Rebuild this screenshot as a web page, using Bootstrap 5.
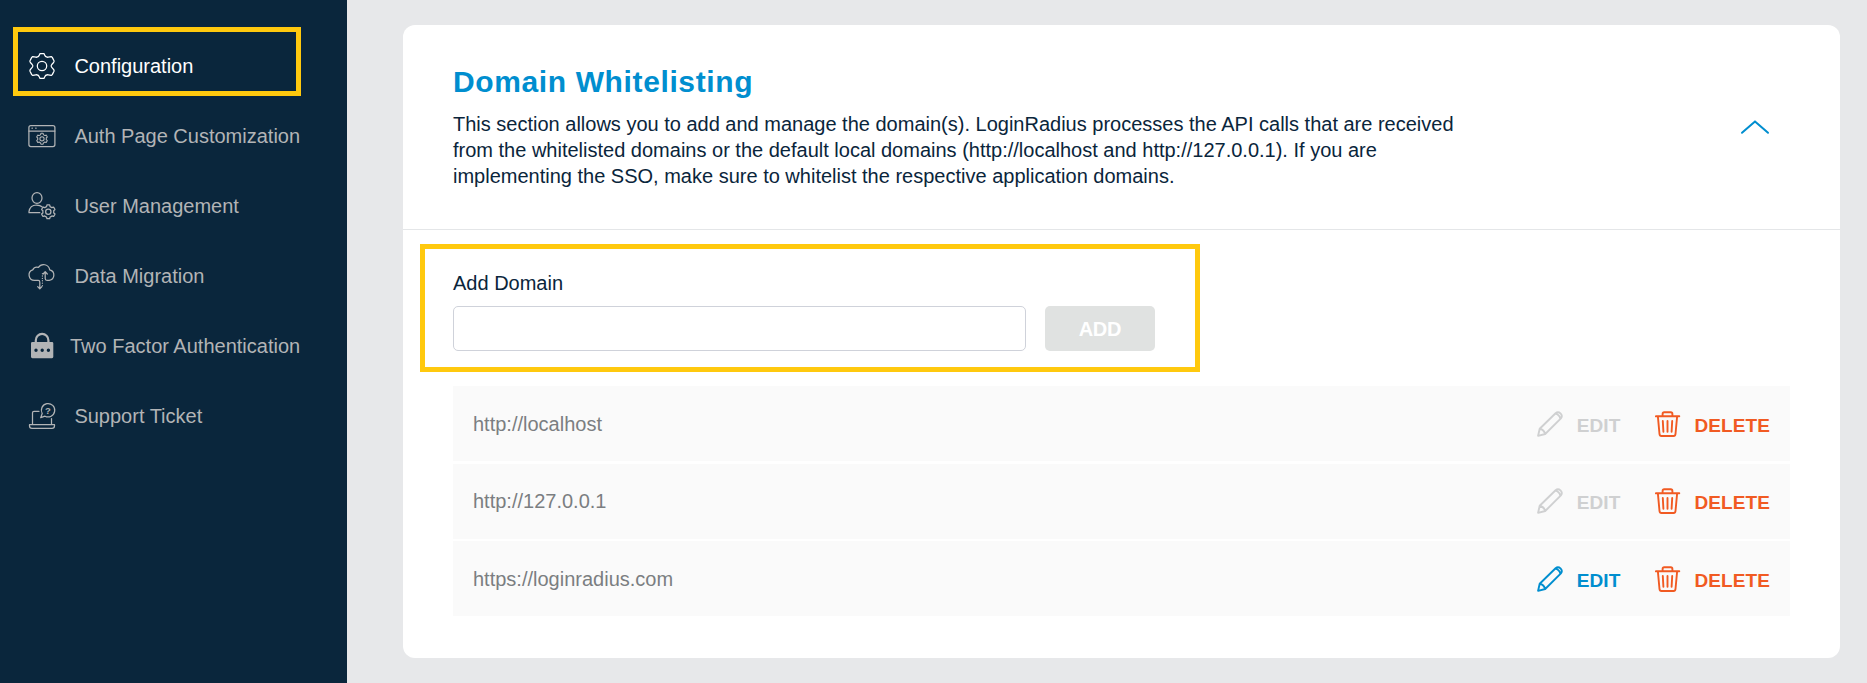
<!DOCTYPE html>
<html lang="en">
<head>
<meta charset="utf-8">
<meta name="viewport" content="width=device-width, initial-scale=1">
<title>Domain Whitelisting</title>
<link rel="stylesheet" href="https://cdn.jsdelivr.net/npm/bootstrap@5.3.0/dist/css/bootstrap.min.css">
<style>
  body { font-family: "Liberation Sans", Arial, sans-serif; font-size: 20px; line-height: 26px; color: #0a253b; background: #e7e8ea; }
  .sidebar { width: 347px; background: #0a263c; padding-top: 31px; }
  .sidebar .nav-link { height: 70px; padding: 0 0 0 28px; color: #b2b4b6; gap: 18.4px; white-space: nowrap; }
  .sidebar .nav-link.active { color: #fff; }
  .sidebar .nav-link.tight { gap: 14px; }
  .sidebar svg { width: 28px; height: 28px; }
  .line-icon { fill: none; stroke: currentColor; stroke-width: 1.25; stroke-linejoin: round; stroke-linecap: round; flex: none; overflow: visible; }
  .marker { position: absolute; border: 5px solid #ffc90e; pointer-events: none; }
  .marker-nav { left: 13px; top: -4px; width: 288px; height: 69px; }
  .marker-form { left: 17px; top: 14px; width: 780px; height: 128px; }
  main { padding: 25px 27px 25px 56px; }
  .panel { height: 633px; border: 0; border-radius: 12px; color: inherit; }
  .panel-head { height: 205px; padding: 38px 71px 0 50px; border-bottom: 1px solid #e4e6e8; }
  .panel-head h1 { font-size: 30px; line-height: 38px; font-weight: 700; letter-spacing: .62px; color: #008ecf; margin: 0 0 10px; }
  .panel-head p { width: 1030px; }
  .chevron { width: 28px; height: 14px; margin-top: 57px; color: #008ecf; }
  .chevron path { stroke-width: 2; }
  .panel-body { padding: 40px 50px 0; }
  .domain-label { margin-bottom: 10px; }
  .domain-input { width: 573px; height: 45px; border: 1px solid #cfd2da; border-radius: 5px; }
  .btn-add { width: 110px; height: 45px; border: 0; border-radius: 5px; font-size: 20px; font-weight: 700; padding: 0; letter-spacing: -.2px; margin-left: 19px; }
  .btn-add:disabled { background: #e0e2e1; color: #fff; opacity: 1; }
  .domains { margin-top: 35px; gap: 2.6px; }
  .domain-item { height: 75px; background: #fafafa; padding: 0 20px; color: #7b7e81; }
  .action { font-size: 19px; font-weight: 700; letter-spacing: .1px; color: #f15a22; text-decoration: none; gap: 13px; }
  .action svg { width: 26px; height: 26px; stroke-width: 1.9; }
  .action span { position: relative; top: 2.4px; }
  .action-edit { color: #008ecf; margin-right: 35px; gap: 14px; }
  .action-edit.off { color: #cfd0d1; }
</style>
</head>
<body>
<svg class="d-none">
  <symbol id="gear" viewBox="-14 -14 28 28" overflow="visible">
    <path vector-effect="non-scaling-stroke" d="M-3.2-9.6L-2.7-12.2Q-2.6-12.8-2-12.8H2Q2.6-12.8 2.7-12.2L3.2-9.6Q5-9 6.71-7.57L9.2-8.5Q9.8-8.7 10.1-8.1L12.1-4.7Q12.4-4.1 12-3.7L9.91-2.03Q10.3 0 9.91 2.03L12 3.7Q12.4 4.1 12.1 4.7L10.1 8.1Q9.8 8.7 9.2 8.5L6.71 7.57Q5 9 3.2 9.6L2.7 12.2Q2.6 12.8 2 12.8H-2Q-2.6 12.8-2.7 12.2L-3.2 9.6Q-5 9-6.71 7.57L-9.2 8.5Q-9.8 8.7-10.1 8.1L-12.1 4.7Q-12.4 4.1-12 3.7L-9.91 2.03Q-10.3 0-9.91-2.03L-12-3.7Q-12.4-4.1-12.1-4.7L-10.1-8.1Q-9.8-8.7-9.2-8.5L-6.71-7.57Q-5-9-3.2-9.6Z"/>
    <circle r="4.9" vector-effect="non-scaling-stroke"/>
  </symbol>
  <symbol id="pencil" viewBox="0 0 26 26">
    <path d="M1.1 24.8L2.7 17.8L18.6 2.2Q21 .2 23.5 2.4Q25.9 4.9 23.9 7.3L8.2 23ZM2.7 17.8Q7 18.8 8.2 23M18.3 2.6Q22.4 3.6 23.4 7.7"/>
  </symbol>
  <symbol id="trash" viewBox="0 0 26 26">
    <path d="M.9 5.3H24.3M7.6 5.1V3Q7.6 1.2 9.2 1.2H15.8Q17.4 1.2 17.4 3V5.1M2.9 5.6L4.5 23Q4.7 25 6.4 25H18.6Q20.3 25 20.5 23L22.1 5.6M7.8 10L8.4 20.8M12.5 10V20.8M17.2 10L16.6 20.8"/>
  </symbol>
</svg>

<div class="d-flex vh-100 overflow-hidden">
  <nav class="sidebar flex-shrink-0">
    <ul class="nav flex-column">
      <li class="nav-item position-relative">
        <a class="nav-link active d-flex align-items-center" href="#">
          <svg class="line-icon" viewBox="0 0 28 28"><path d="M11.4 3L11.9 1.6H16.1L16.6 3Q17.4 5.6 20.2 5.2L23.2 4.6L24.4 5.6L26 8.8Q26.4 9.8 25.4 10.8Q22.9 13.4 23.2 14Q22.9 14.6 25.4 17.2Q26.4 18.2 26 19.2L24.4 22.4L23.2 23.4L20.2 22.8Q17.4 22.4 16.6 25L16.1 26.4H11.9L11.4 25Q10.6 22.4 7.8 22.8L4.8 23.4L3.6 22.4L2 19.2Q1.6 18.2 2.6 17.2Q5.1 14.6 4.8 14Q5.1 13.4 2.6 10.8Q1.6 9.8 2 8.8L3.6 5.6L4.8 4.6L7.8 5.2Q10.6 5.6 11.4 3Z"/><circle cx="14" cy="14" r="4.7"/></svg>
          Configuration
        </a>
        <span class="marker marker-nav"></span>
      </li>
      <li class="nav-item">
        <a class="nav-link d-flex align-items-center" href="#">
          <svg class="line-icon" viewBox="0 0 28 28"><rect x=".9" y="3.5" width="26" height="21" rx="2"/><path d="M.9 9H26.9M4 6.2H4.4M7.7 6.2H8.1"/><use href="#gear" x="8" y="10.8" width="12" height="12" stroke-width="1.1"/></svg>
          Auth Page Customization
        </a>
      </li>
      <li class="nav-item">
        <a class="nav-link d-flex align-items-center" href="#">
          <svg class="line-icon" viewBox="0 0 28 28"><ellipse cx="9" cy="6" rx="5" ry="5.4"/><path d="M11.8 20.7H1V19.5Q2 13.2 8.5 13Q12.3 13 14 14.8"/><use href="#gear" x="12.7" y="12.2" width="15.2" height="15.2"/></svg>
          User Management
        </a>
      </li>
      <li class="nav-item">
        <a class="nav-link d-flex align-items-center" href="#">
          <svg class="line-icon" viewBox="0 0 28 28"><path d="M11.8 26V20Q11.8 18.4 10.2 18.4H6.5A5.4 5.4 0 0 1 4.7 7.9Q6.5 4.3 10.4 5.4A6.2 6.2 0 0 1 21.7 7.8A5.4 5.4 0 0 1 21.2 18.4H19Q17.2 18.4 17.2 16.6V10.5M9.7 24.6L11.8 26.9L13.9 24.6M15.1 12L17.2 9.7L19.3 12"/><path stroke-dasharray=".1 2.3" d="M14.4 11.5V24.2"/></svg>
          Data Migration
        </a>
      </li>
      <li class="nav-item">
        <a class="nav-link tight d-flex align-items-center" href="#">
          <svg class="line-icon" viewBox="0 0 28 28"><path stroke-width="2.2" d="M7.8 10V8.2A6.3 6.3 0 0 1 20.4 8.2V10"/><path fill="currentColor" fill-rule="evenodd" stroke="none" d="M4.4 9.9H24Q25.3 9.9 25.3 11.2V24.8Q25.3 26.2 24 26.2H4.4Q3 26.2 3 24.8V11.2Q3 9.9 4.4 9.9ZM6.3 18.2a1.7 1.7 0 1 0 3.4 0a1.7 1.7 0 1 0-3.4 0ZM12.5 18.2a1.7 1.7 0 1 0 3.4 0a1.7 1.7 0 1 0-3.4 0ZM18.7 18.2a1.7 1.7 0 1 0 3.4 0a1.7 1.7 0 1 0-3.4 0Z"/></svg>
          Two Factor Authentication
        </a>
      </li>
      <li class="nav-item">
        <a class="nav-link d-flex align-items-center" href="#">
          <svg class="line-icon" viewBox="0 0 28 28"><path d="M4.5 22.5V10.7Q4.5 9.3 6 9.3H11M23.5 16.5V22.5M1.5 22.7H26.5V23.7Q26.5 26.3 24 26.3H4Q1.5 26.3 1.5 23.7ZM12.7 15.7L14.2 11.5A6.7 6.7 0 1 1 17 14.2Z"/><text x="20" y="11.6" text-anchor="middle" font-size="9.5" font-weight="700" fill="currentColor" stroke="none">?</text></svg>
          Support Ticket
        </a>
      </li>
    </ul>
  </nav>

  <main class="flex-grow-1">
    <section class="card panel">
      <header class="panel-head d-flex justify-content-between align-items-start">
        <div>
          <h1>Domain Whitelisting</h1>
          <p class="mb-0">This section allows you to add and manage the domain(s). LoginRadius processes the API calls that are received<br>from the whitelisted domains or the default local domains (http://localhost and http://127.0.0.1). If you are<br>implementing the SSO, make sure to whitelist the respective application domains.</p>
        </div>
        <svg class="line-icon chevron" viewBox="0 0 28 14"><path d="M1 12.8L14 1.4L27 12.8"/></svg>
      </header>

      <div class="panel-body position-relative">
        <span class="marker marker-form"></span>
        <form>
          <label class="domain-label d-block" for="domain">Add Domain</label>
          <div class="d-flex">
            <input id="domain" type="text" class="form-control domain-input">
            <button type="button" class="btn btn-add" disabled>ADD</button>
          </div>
        </form>

        <div class="domains d-flex flex-column">
          <div class="domain-item d-flex align-items-center">
            <span class="me-auto">http://localhost</span>
            <a class="action action-edit off d-flex align-items-center" href="#"><svg class="line-icon"><use href="#pencil"/></svg><span>EDIT</span></a>
            <a class="action d-flex align-items-center" href="#"><svg class="line-icon"><use href="#trash"/></svg><span>DELETE</span></a>
          </div>
          <div class="domain-item d-flex align-items-center">
            <span class="me-auto">http://127.0.0.1</span>
            <a class="action action-edit off d-flex align-items-center" href="#"><svg class="line-icon"><use href="#pencil"/></svg><span>EDIT</span></a>
            <a class="action d-flex align-items-center" href="#"><svg class="line-icon"><use href="#trash"/></svg><span>DELETE</span></a>
          </div>
          <div class="domain-item d-flex align-items-center">
            <span class="me-auto">https://loginradius.com</span>
            <a class="action action-edit d-flex align-items-center" href="#"><svg class="line-icon"><use href="#pencil"/></svg><span>EDIT</span></a>
            <a class="action d-flex align-items-center" href="#"><svg class="line-icon"><use href="#trash"/></svg><span>DELETE</span></a>
          </div>
        </div>
      </div>
    </section>
  </main>
</div>
<script src="https://cdn.jsdelivr.net/npm/bootstrap@5.3.0/dist/js/bootstrap.bundle.min.js"></script>
</body>
</html>
